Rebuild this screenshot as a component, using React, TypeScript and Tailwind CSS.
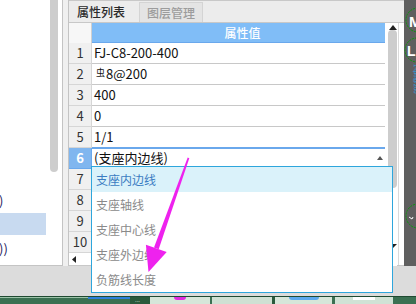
import React from 'react'

const values = ['FJ-C8-200-400', '', '400', '0', '1/1', '(支座内边线)', '', '', '', '']
const options = ['支座内边线', '支座轴线', '支座中心线', '支座外边线', '负筋线长度']

function Arrow() {
  return (
    <svg className="absolute left-0 top-0 pointer-events-none" width="416" height="304" viewBox="0 0 416 304">
      <polygon points="187.7,157.6 189.3,158.3 158.7,249.2 154,247.6" fill="#ee22ee" />
      <polygon points="145.9,244.7 166.7,252.1 148.5,272" fill="#ee22ee" />
    </svg>
  )
}

function CadStrip() {
  return (
    <div className="w-[12px] h-full bg-[#5f5f5f] overflow-hidden">
      <svg width="12" height="266" viewBox="0 0 12 266">
        <circle cx="14" cy="20" r="12" fill="none" stroke="#0a9a0a" strokeWidth="1" strokeDasharray="2 1" />
        <text x="5" y="27" fill="#ffffff" fontSize="15" fontFamily="Liberation Sans" fontWeight="bold">M</text>
        <circle cx="13" cy="50" r="12" fill="none" stroke="#0a9a0a" strokeWidth="1" strokeDasharray="2 1" />
        <text x="3" y="56" fill="#ffffff" fontSize="14" fontFamily="Liberation Sans" fontWeight="bold">L</text>
        <text x="0" y="0" transform="translate(10,64) rotate(90)" fill="#27a3e6" fontSize="6" fontFamily="Liberation Sans">1-ф8@200</text>
        <circle cx="14" cy="216" r="12" fill="none" stroke="#0a9a0a" strokeWidth="1" strokeDasharray="2 1" />
        <path d="M5 217 L8 219 L9 217" stroke="#ffffff" strokeWidth="1" fill="none" />
      </svg>
    </div>
  )
}

export default function App() {
  return (
    <div className="relative w-[416px] h-[304px] overflow-hidden bg-[#dcdcdc] font-['Noto_Sans_CJK_SC',sans-serif] text-[12px] flex flex-col">
      <div className="flex h-[266px]">
        {/* left tree panel */}
        <div className="w-[63px] h-full bg-white border-r border-b border-[#c4c4c4] flex">
          <div className="w-[50px] flex flex-col text-[#22205e] text-[13px] leading-[16px]">
            <div className="h-[193px]" />
            <div className="h-[20px] -ml-[1px]">)</div>
            <div className="h-[22px] w-[46px] bg-[#c8daf0]" />
            <div className="h-[6px]" />
            <div className="h-[18px] -ml-[1px]">))</div>
          </div>
          <div className="w-[8px] h-[172px] bg-[#cdcdcd] rounded-b-[4px]" />
        </div>
        <div className="w-[5px] h-full bg-[#f0f0f0]" />

        {/* property panel */}
        <div className="w-[336px] h-full border-l border-[#c4c4c4] bg-white flex flex-col">
          <div className="h-[23px] bg-[#ececec] border-t border-b border-[#c8c8c8] flex items-end pl-[8px] gap-[4px]">
            <div className="h-[21px] w-[58px] flex items-center text-[#2a2a2a] font-medium">属性列表</div>
            <div className="h-[20px] w-[64px] bg-[#e4e4e4] border border-b-0 border-[#d4d4d4] flex items-center justify-center text-[#9c9c9c] font-medium">图层管理</div>
          </div>

          <div className="flex h-[243px]">
            <div className="w-[316px] flex flex-col">
              <div className="flex h-[20px]">
                <div className="w-[23px] bg-[#f7f7f7] border-r border-[#d0d0d0]" />
                <div className="flex-1 bg-[#80bdf7] border-b border-[#6aa8ec] flex items-center justify-center pl-[8px] text-white font-medium">属性值</div>
              </div>
              {values.map((v, i) => {
                const sel = i === 5
                return (
                  <div key={i} className="flex h-[21px]">
                    <div
                      className={
                        sel
                          ? 'w-[23px] bg-[#80b6ef] border-r border-b border-[#6aa8ec] flex items-center justify-center text-white font-bold text-[13px]'
                          : 'w-[23px] bg-[#f0f0f0] border-r border-b border-[#d6d6d6] flex items-center justify-center text-[#333333] text-[13px]'
                      }
                    >
                      {i + 1}
                    </div>
                    <div
                      className={
                        i === 4
                          ? 'flex-1 border-b border-[#6aa8ec] flex items-center pl-[2px] text-[#111111] text-[13px]'
                          : sel
                          ? 'flex-1 shadow-[inset_0_1px_0_#6aa8ec] border-b border-[#c8c8c8] flex items-center pl-[2px] pr-[2px] text-[#111111] text-[13px]'
                          : 'flex-1 border-b border-[#c8c8c8] flex items-center pl-[2px] text-[#111111] text-[13px]'
                      }
                    >
                      {i === 1 ? (
                        <span>
                          <span className="text-[9px] relative -top-[3px] ml-[2px] mr-[1px]">虫</span>8@200
                        </span>
                      ) : (
                        <span className="flex-1">{v}</span>
                      )}
                      {sel && (
                        <svg width="6" height="5" viewBox="0 0 6 5">
                          <path d="M0 4 L3 0 L6 4 Z" fill="#555555" />
                        </svg>
                      )}
                    </div>
                  </div>
                )
              })}
              <div className="h-[13px] flex border-b border-[#c8c8c8]">
                <div className="w-[23px] flex items-center pl-[3px]">
                  <svg width="4" height="7" viewBox="0 0 4 7">
                    <path d="M4 0 L0 3.5 L4 7 Z" fill="#222222" />
                  </svg>
                </div>
              </div>
            </div>

            <div className="w-[12px] pl-[3px] flex flex-col">
              <div className="h-[7px] flex items-end justify-center">
                <svg width="8" height="5" viewBox="0 0 8 5">
                  <path d="M0 5 L4 0 L8 5 Z" fill="#222222" />
                </svg>
              </div>
              <div className="h-[158px] bg-[#cdcdcd] rounded-[4px]" />
              <div className="h-[56px]" />
              <div className="flex justify-center">
                <svg width="8" height="4" viewBox="0 0 8 4">
                  <path d="M0 0 L8 0 L4 4 Z" fill="#222222" />
                </svg>
              </div>
            </div>

            <div className="w-[7px] bg-white pl-[1px] border-b border-[#c8c8c8]">
              <div className="h-full border-l border-[#dadada]" />
            </div>
          </div>
        </div>

        <CadStrip />
      </div>

      <div className="h-[30px]" />

      <div className="h-[8px] border-t border-[#1f4a31] bg-[#3b7052] flex">
        <div className="w-[88px] border-t border-[#9cc2a8]" />
        <div className="w-[42px] border-t-[2px] border-[#2b7fdc]" />
        <div className="w-[20px] bg-[#2a5a3c] text-[#cfe0d4] text-[6px] leading-[6px] pl-[5px]">...</div>
        <div className="w-[60px] bg-[#d6e6d9] flex justify-center">
          <div className="w-[12px] h-[3px] rounded-b-full bg-[#e02ae0]" />
        </div>
        <div className="w-[2px]" />
        <div className="w-[60px] bg-[#cfe0d3]" />
        <div className="w-[3px] bg-[#2a5a3c]" />
        <div className="w-[57px] bg-[#d6e6d9] flex justify-center">
          <div className="w-[30px] h-[3px] rounded-b-full bg-[#5aa8ee]" />
        </div>
        <div className="w-[3px]" />
        <div className="w-[58px] bg-[#d0e2d5] flex justify-center">
          <div className="w-[22px] h-[3px] bg-white" />
        </div>
      </div>

      {/* dropdown list */}
      <div className="absolute left-[91px] top-[166px] w-[302px] h-[127px] border border-[#2ea6dc] bg-white flex flex-col text-[12px]">
        {options.map((o, i) => (
          <div
            key={o}
            className={
              i === 0
                ? 'h-[25px] bg-[#daf2fa] flex items-center pl-[4px] text-[#3a7cc2]'
                : 'h-[25px] flex items-center pl-[4px] text-[#8a8a8a]'
            }
          >
            {o}
          </div>
        ))}
      </div>

      <Arrow />
    </div>
  )
}
